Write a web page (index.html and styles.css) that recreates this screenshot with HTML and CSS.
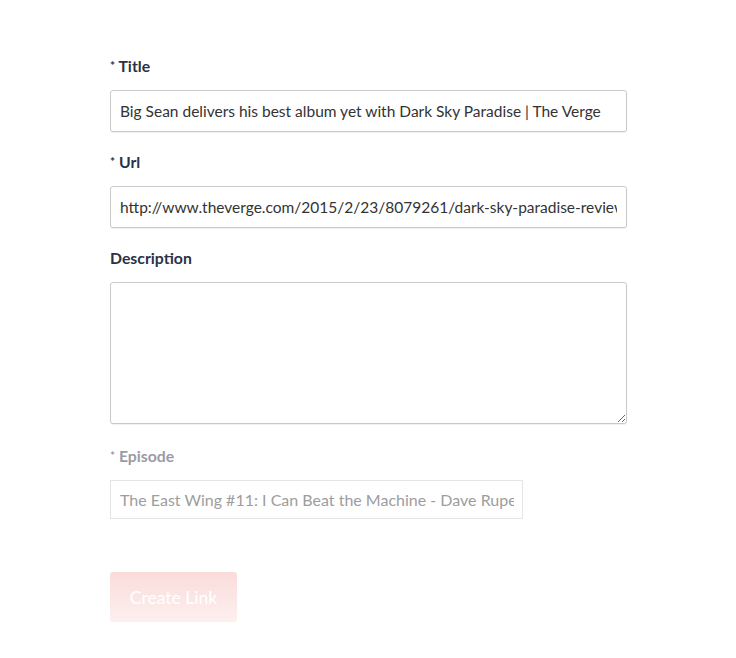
FILE: index.html
```html
<!DOCTYPE html>
<html>
<head>
<meta charset="utf-8">
<link rel="stylesheet" href="styles.css">
</head>
<body>
<form class="form">
  <div class="field">
    <label class="label"><span class="req">*</span> Title</label>
    <input class="input" type="text" value="Big Sean delivers his best album yet with Dark Sky Paradise | The Verge">
  </div>
  <div class="field">
    <label class="label"><span class="req">*</span> Url</label>
    <input class="input" type="text" value="http://www.theverge.com/2015/2/23/8079261/dark-sky-paradise-review-big-sean">
  </div>
  <div class="field field-desc">
    <label class="label">Description</label>
    <textarea class="textarea"></textarea>
  </div>
  <div class="field disabled">
    <label class="label"><span class="req">*</span> Episode</label>
    <div class="select"><span class="select-text">The East Wing #11: I Can Beat the Machine - Dave Rupert</span></div>
  </div>
  <div class="actions">
    <button class="button" type="button">Create Link</button>
  </div>
</form>
</body>
</html>
```
FILE: styles.css
```css
html, body {
  margin: 0;
  padding: 0;
  background: #fff;
}
body {
  font-family: "Lato", "Open Sans", sans-serif;
  color: #2d3548;
}
.form {
  width: 517px;
  padding: 56px 0 0 110px;
}
.field {
  display: flex;
  flex-direction: column;
  margin-bottom: 20px;
}
.field-desc {
  margin-top: 1px;
  margin-bottom: 22px;
}
.label {
  font-size: 15.8px;
  font-weight: 700;
  line-height: 20px;
  color: #2b3247;
  margin-bottom: 14px;
}
.req {
  font-size: 12px;
  vertical-align: 2px;
}
.input, .textarea {
  box-sizing: border-box;
  width: 517px;
  height: 42px;
  border: 1px solid #c9c9c9;
  border-radius: 3px;
  padding: 0 9px;
  font-family: "Lato", "Open Sans", sans-serif;
  font-size: 15.5px;
  color: #333;
  background: #fff;
  box-shadow: 0 1px 1px rgba(0,0,0,0.06);
  outline: none;
}
.textarea {
  height: 142px;
  resize: vertical;
  display: block;
}
.disabled .label {
  color: #9a9ca6;
}
.select {
  box-sizing: border-box;
  width: 413px;
  height: 39px;
  border: 1px solid #e4e4e4;
  padding: 0 8px 0 9px;
  font-size: 16px;
  line-height: 37px;
  color: #9d9d9d;
}
.select-text {
  display: block;
  white-space: nowrap;
  overflow: hidden;
}
.actions {
  padding-top: 33px;
}
.button {
  width: 127px;
  height: 50px;
  border: none;
  border-radius: 3px;
  background: linear-gradient(#fadcda, #fcf0ef);
  color: #fff;
  font-family: "Lato", "Open Sans", sans-serif;
  font-size: 17.5px;
  padding: 0;
}
```
